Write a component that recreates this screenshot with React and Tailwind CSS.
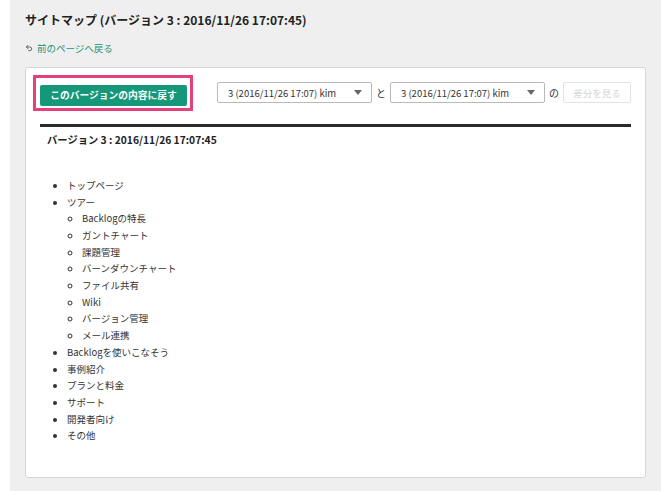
import { Undo2 } from "lucide-react";

const font = { fontFamily: '"Noto Sans CJK JP", "Noto Sans", sans-serif' };

const tree = [
    { label: "トップページ" },
    {
        label: "ツアー",
        children: [
            "Backlogの特長",
            "ガントチャート",
            "課題管理",
            "バーンダウンチャート",
            "ファイル共有",
            "Wiki",
            "バージョン管理",
            "メール連携",
        ],
    },
    { label: "Backlogを使いこなそう" },
    { label: "事例紹介" },
    { label: "プランと料金" },
    { label: "サポート" },
    { label: "開発者向け" },
    { label: "その他" },
];

const Caret = () => (
    <svg width="8" height="5" viewBox="0 0 8 5" className="shrink-0">
        <path d="M0 0h8L4 5z" fill="#666" />
    </svg>
);

const VersionSelect = () => (
    <div className="flex items-center justify-between w-[155px] h-[21px] pl-[10px] pr-[9px] bg-white border border-[#b9b9b9] rounded-[2px] text-[9.5px] text-[#333]">
        <span>3 (2016/11/26 17:07) kim</span>
        <Caret />
    </div>
);

export default function App() {
    return (
        <div className="bg-white pl-[10px] min-h-screen" style={font}>
            <div className="bg-[#efefef] min-h-screen px-[15px] pt-[12px] pb-[17px]">
                <h1 className="text-[12px] leading-[16px] font-bold text-[#222]">
                    サイトマップ (バージョン 3 : 2016/11/26 17:07:45)
                </h1>
                <div className="mt-[13px] flex items-center gap-[4px] text-[9.5px] leading-[14px]">
                    <Undo2 size={8} strokeWidth={3} className="text-[#666]" />
                    <a className="text-[#1a9479] cursor-pointer">前のページへ戻る</a>
                </div>

                <div className="mt-[12px] bg-white border border-[#d6d6d6] rounded-[3px] px-[14px] pt-[12px] pb-[33px]">
                    <div className="flex items-center justify-between">
                        <div className="relative">
                            <button className="w-[147px] h-[21px] bg-[#15987a] rounded-[2px] text-white text-[9.75px] font-bold">
                                このバージョンの内容に戻す
                            </button>
                            <div className="absolute -left-[7px] -right-[6px] -top-[5px] -bottom-[5px] border-[3px] border-[#e4417c] pointer-events-none" />
                        </div>
                        <div className="flex items-center gap-[4px] text-[10px] text-[#333]">
                            <VersionSelect />
                            <span className="w-[10px]">と</span>
                            <VersionSelect />
                            <span className="w-[10px]">の</span>
                            <button disabled className="w-[68px] h-[21px] border border-[#e3e3e3] rounded-[2px] text-[9.5px] text-[#d4d4d4] bg-white">
                                差分を見る
                            </button>
                        </div>
                    </div>

                    <div className="mt-[18px] h-[3px] bg-[#2b2b2b]" />

                    <h2 className="mt-[6px] pl-[7px] text-[10.3px] leading-[14px] font-bold text-[#222]">
                        バージョン 3 : 2016/11/26 17:07:45
                    </h2>

                    <ul className="mt-[30px] list-disc pl-[27px] text-[9.5px] leading-[16.7px] text-[#333]">
                        {tree.map((item) => (
                            <li key={item.label}>
                                {item.label}
                                {item.children && (
                                    <ul className="list-[circle] pl-[15px]">
                                        {item.children.map((c) => (
                                            <li key={c}>{c}</li>
                                        ))}
                                    </ul>
                                )}
                            </li>
                        ))}
                    </ul>
                </div>
            </div>
        </div>
    );
}
